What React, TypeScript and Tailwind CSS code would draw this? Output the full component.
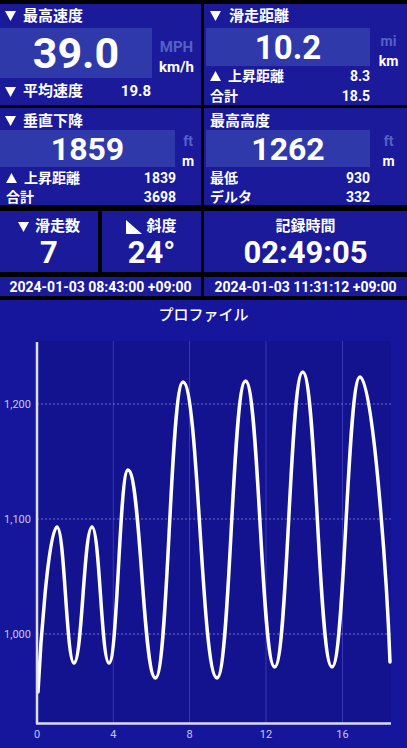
const FONT = "font-['Roboto','Noto_Sans_CJK_JP',sans-serif]";

function Down() {
  return (
    <svg width="11" height="10" viewBox="0 0 11 10" className="shrink-0">
      <path d="M0 0H11L5.5 10Z" fill="white" />
    </svg>
  );
}

function Up() {
  return (
    <svg width="11" height="10" viewBox="0 0 11 10" className="shrink-0">
      <path d="M0 10H11L5.5 0Z" fill="white" />
    </svg>
  );
}

function Slope() {
  return (
    <svg width="16" height="14" viewBox="0 0 16 14" className="shrink-0">
      <path d="M0 0L16 14H0Z" fill="white" />
    </svg>
  );
}

function Row({ label, value, up, width, h }: { label: string; value: string; up?: boolean; width: string; h: string }) {
  return (
    <div className={`${width} ${h} flex items-center justify-between pl-[6px] text-[14px] font-bold leading-none`}>
      <span className="flex items-center gap-[7px]">
        {up && <Up />}
        {label}
      </span>
      <span>{value}</span>
    </div>
  );
}

// 曲線: 山と谷の座標 (SVG座標, y は 330 引き)
const pts: [number, number][] = [
  [57, 197],
  [74, 333],
  [92, 197],
  [109, 333],
  [128, 140],
  [155.5, 348],
  [183, 52],
  [217, 348],
  [245.5, 51],
  [274.7, 337],
  [302.7, 42],
  [332, 337],
  [360, 47],
];

function curve() {
  let d = "M38 362 C40 320 48.5 197 57 197";
  for (let i = 1; i < pts.length; i++) {
    const [x1, y1] = pts[i - 1];
    const [x2, y2] = pts[i];
    const k = (x2 - x1) * 0.45;
    d += ` C${x1 + k} ${y1} ${x2 - k} ${y2} ${x2} ${y2}`;
  }
  d += " C373 47 387 250 390 332";
  return d;
}

function Chart() {
  const vx = [113.3, 189.5, 266, 342.5];
  const hy = [
    { y: 74, t: "1,200" },
    { y: 189, t: "1,100" },
    { y: 304, t: "1,000" },
  ];
  const xl = [
    { x: 37, t: "0" },
    { x: 113.3, t: "4" },
    { x: 189.5, t: "8" },
    { x: 266, t: "12" },
    { x: 342.5, t: "16" },
  ];
  return (
    <div className="flex-1 bg-[#16169c] flex flex-col">
      <div className="h-[30px] flex items-center justify-center text-[15px] font-medium">プロファイル</div>
      <svg width="407" height="418" viewBox="0 0 407 418" className="block">
        <rect x="37" y="11" width="354" height="382" fill="#13138f" />
        {vx.map((x) => (
          <line key={x} x1={x} y1="11" x2={x} y2="393" stroke="#3838b4" strokeWidth="1" />
        ))}
        {hy.map((h) => (
          <line key={h.y} x1="37" y1={h.y} x2="391" y2={h.y} stroke="#6a70cc" strokeWidth="1" strokeDasharray="2 2" />
        ))}
        {hy.map((h) => (
          <text key={h.t} x="31" y={h.y + 4} textAnchor="end" fontSize="11" fill="#c4c8f0" fontFamily="Roboto, sans-serif">
            {h.t}
          </text>
        ))}
        {xl.map((l) => (
          <text key={l.t} x={l.x} y="408" textAnchor="middle" fontSize="11" fill="#c4c8f0" fontFamily="Roboto, sans-serif">
            {l.t}
          </text>
        ))}
        <path d={curve()} fill="none" stroke="white" strokeWidth="3.5" strokeLinecap="round" strokeLinejoin="round" />
        <line x1="37" y1="12" x2="37" y2="394" stroke="#dcdef8" strokeWidth="2.5" />
        <line x1="36" y1="393.5" x2="391" y2="393.5" stroke="#dcdef8" strokeWidth="2.5" />
      </svg>
    </div>
  );
}

export default function App() {
  return (
    <div className={`w-[407px] h-[748px] bg-black text-white flex flex-col pt-[4px] overflow-hidden ${FONT}`}>
      {/* 1段目 */}
      <div className="grid grid-cols-[201px_203px] gap-x-[3px] h-[101px]">
        <div className="bg-[#1a1a9a] flex flex-col">
          <div className="h-[24px] flex items-center gap-[7px] pl-[5px] text-[15px] font-bold leading-none">
            <Down />
            最高速度
          </div>
          <div className="flex h-[50px]">
            <div className="w-[152px] bg-[#2f39aa] flex items-center justify-center text-[43px] font-bold leading-none">39.0</div>
            <div className="flex-1 flex flex-col items-center pt-[12px] gap-[5px] text-[15px] font-bold leading-none">
              <span className="text-[#5560c8]">MPH</span>
              <span>km/h</span>
            </div>
          </div>
          <div className="flex-1 flex items-center">
            <div className="w-[152px] flex items-center justify-between pl-[5px] pr-[1px] text-[15px] font-bold leading-none">
              <span className="flex items-center gap-[7px]">
                <Down />
                平均速度
              </span>
              <span>19.8</span>
            </div>
          </div>
        </div>

        <div className="bg-[#1a1a9a] flex flex-col">
          <div className="h-[24px] flex items-center gap-[8px] pl-[6px] text-[15px] font-bold leading-none">
            <Down />
            滑走距離
          </div>
          <div className="flex h-[38px]">
            <div className="ml-[2px] w-[164px] bg-[#2f39aa] flex items-center justify-center text-[33px] font-bold leading-none">10.2</div>
            <div className="flex-1 flex flex-col items-center pt-[6px] gap-[6px] text-[14px] font-bold leading-none">
              <span className="text-[#5560c8]">mi</span>
              <span>km</span>
            </div>
          </div>
          <Row label="上昇距離" value="8.3" up width="w-[166px]" h="h-[20px]" />
          <Row label="合計" value="18.5" width="w-[166px]" h="flex-1" />
        </div>
      </div>

      {/* 2段目 */}
      <div className="grid grid-cols-[201px_203px] gap-x-[3px] h-[97px] mt-[3px]">
        <div className="bg-[#1a1a9a] flex flex-col">
          <div className="h-[22px] flex items-center gap-[7px] pl-[5px] pt-[4px] text-[15px] font-bold leading-none">
            <Down />
            垂直下降
          </div>
          <div className="flex h-[37px]">
            <div className="w-[175px] bg-[#2f39aa] flex items-center justify-center text-[32px] font-bold leading-none">1859</div>
            <div className="flex-1 flex flex-col items-center pt-[4px] gap-[6px] text-[14px] font-bold leading-none">
              <span className="text-[#5560c8]">ft</span>
              <span>m</span>
            </div>
          </div>
          <Row label="上昇距離" value="1839" up width="w-[176px]" h="h-[21px]" />
          <Row label="合計" value="3698" width="w-[176px]" h="flex-1" />
        </div>

        <div className="bg-[#1a1a9a] flex flex-col">
          <div className="h-[22px] flex items-center pl-[6px] pt-[4px] text-[15px] font-bold leading-none">最高高度</div>
          <div className="flex h-[37px]">
            <div className="ml-[2px] w-[164px] bg-[#2f39aa] flex items-center justify-center text-[32px] font-bold leading-none">1262</div>
            <div className="flex-1 flex flex-col items-center pt-[4px] gap-[6px] text-[14px] font-bold leading-none">
              <span className="text-[#5560c8]">ft</span>
              <span>m</span>
            </div>
          </div>
          <Row label="最低" value="930" width="w-[166px]" h="h-[21px]" />
          <Row label="デルタ" value="332" width="w-[166px]" h="flex-1" />
        </div>
      </div>

      {/* 3段目 */}
      <div className="grid grid-cols-[201px_203px] gap-x-[3px] h-[61px] mt-[6px]">
        <div className="grid grid-cols-[98px_99px] gap-x-[4px]">
          <div className="bg-[#1a1a9a] flex flex-col items-center pt-[8px] gap-[3px]">
            <div className="flex items-center gap-[6px] text-[15px] font-bold leading-none">
              <Down />
              滑走数
            </div>
            <div className="text-[31px] font-bold leading-none">7</div>
          </div>
          <div className="bg-[#1a1a9a] flex flex-col items-center pt-[8px] gap-[3px]">
            <div className="flex items-center gap-[4px] text-[15px] font-bold leading-none">
              <Slope />
              斜度
            </div>
            <div className="text-[31px] font-bold leading-none">24°</div>
          </div>
        </div>
        <div className="bg-[#1a1a9a] flex flex-col items-center pt-[8px] gap-[3px]">
          <div className="text-[15px] font-bold leading-none">記録時間</div>
          <div className="text-[31px] font-bold leading-none">02:49:05</div>
        </div>
      </div>

      {/* 日時 */}
      <div className="grid grid-cols-[201px_203px] gap-x-[3px] h-[19px] mt-[5px]">
        <div className="bg-[#1a1a9a] flex items-center justify-center text-[14px] font-bold leading-none">2024-01-03 08:43:00 +09:00</div>
        <div className="bg-[#1a1a9a] flex items-center justify-center text-[14px] font-bold leading-none">2024-01-03 11:31:12 +09:00</div>
      </div>

      <div className="mt-[4px] flex-1 flex flex-col">
        <Chart />
      </div>
    </div>
  );
}
